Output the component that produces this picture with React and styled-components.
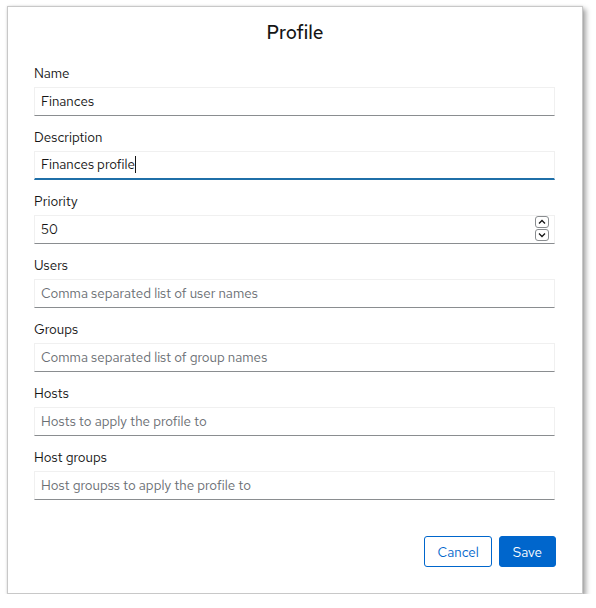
import React from "react";
import styled, { createGlobalStyle } from "styled-components";

const Global = createGlobalStyle`
  html, body { margin: 0; padding: 0; background: #ffffff; }
  body { font-family: "Red Hat Text", "Noto Sans", "Open Sans", sans-serif; color: #151515; }
  * { box-sizing: border-box; }
`;

const Dialog = styled.div`
  margin: 6px 0 0 7px;
  width: 576px;
  height: 588px;
  background: #fff;
  border: 1px solid #c8c8c8;
  box-shadow: 3px 3px 5px rgba(0, 0, 0, 0.35), 0 0 2px rgba(0, 0, 0, 0.12);
  display: flex;
  flex-direction: column;
  padding: 12px 26px 26px 26px;
`;

const Title = styled.h1`
  margin: 0 0 16px;
  font-size: 19px;
  line-height: 28px;
  font-weight: 500;
  text-align: center;
  color: #151515;
`;

const Form = styled.form`
  display: flex;
  flex-direction: column;
  gap: 11px;
  padding-right: 1px;
`;

const Field = styled.div`
  display: flex;
  flex-direction: column;
  gap: 3px;
`;

const Label = styled.label`
  font-size: 13.4px;
  line-height: 21px;
  color: #151515;
`;

const InputWrap = styled.div`
  position: relative;
  display: flex;
`;

const Input = styled.input`
  width: 100%;
  height: 29px;
  font: inherit;
  font-size: 13.4px;
  color: #151515;
  padding: 0 6px 2px;
  border: 1px solid #f0f0f0;
  border-bottom: ${(p) => (p.$focused ? "2px solid #1f6fa8" : "1px solid #8a8d90")};
  background: #fff;
  outline: none;
  border-radius: 0;
  &::placeholder { color: #6a6e73; }
  &::-webkit-outer-spin-button,
  &::-webkit-inner-spin-button { -webkit-appearance: none; margin: 0; }
`;

const Caret = styled.span`
  position: absolute;
  top: 5px;
  width: 1px;
  height: 17px;
  background: #151515;
  left: ${(p) => p.$left}px;
`;

const Spinner = styled.div`
  position: absolute;
  right: 6px;
  top: 1px;
  display: flex;
  flex-direction: column;
  gap: 1px;
`;

const SpinBtn = styled.span`
  width: 14px;
  height: 12px;
  border: 1px solid #8a8d90;
  border-radius: 3px;
  display: flex;
  align-items: center;
  justify-content: center;
  background: #fff;
`;

const Footer = styled.div`
  margin-top: auto;
  display: flex;
  justify-content: flex-end;
  gap: 7px;
`;

const Button = styled.button`
  height: 31px;
  font: inherit;
  font-size: 13.4px;
  padding: 0 ${(p) => (p.$primary ? 13 : 12)}px;
  border-radius: 3px;
  cursor: pointer;
  border: 1px solid #0066cc;
  background: ${(p) => (p.$primary ? "#0066cc" : "#fff")};
  color: ${(p) => (p.$primary ? "#fff" : "#0066cc")};
`;

const Chevron = ({ up }) => (
  <svg width="8" height="6" viewBox="0 0 8 6">
    <path
      d={up ? "M1 4.5 L4 1.5 L7 4.5" : "M1 1.5 L4 4.5 L7 1.5"}
      fill="none"
      stroke="#151515"
      strokeWidth="1.3"
    />
  </svg>
);

const fields = [
  { label: "Users", placeholder: "Comma separated list of user names" },
  { label: "Groups", placeholder: "Comma separated list of group names" },
  { label: "Hosts", placeholder: "Hosts to apply the profile to" },
  { label: "Host groups", placeholder: "Host groupss to apply the profile to" },
];

export default function App() {
  return (
    <>
      <Global />
      <Dialog>
        <Title>Profile</Title>
        <Form onSubmit={(e) => e.preventDefault()}>
          <Field>
            <Label>Name</Label>
            <Input defaultValue="Finances" />
          </Field>
          <Field>
            <Label>Description</Label>
            <InputWrap>
              <Input $focused defaultValue="Finances profile" />
              <Caret $left={101} />
            </InputWrap>
          </Field>
          <Field>
            <Label>Priority</Label>
            <InputWrap>
              <Input type="number" defaultValue="50" />
              <Spinner>
                <SpinBtn><Chevron up /></SpinBtn>
                <SpinBtn><Chevron /></SpinBtn>
              </Spinner>
            </InputWrap>
          </Field>
          {fields.map((f) => (
            <Field key={f.label}>
              <Label>{f.label}</Label>
              <Input placeholder={f.placeholder} />
            </Field>
          ))}
        </Form>
        <Footer>
          <Button type="button">Cancel</Button>
          <Button type="button" $primary>Save</Button>
        </Footer>
      </Dialog>
    </>
  );
}
